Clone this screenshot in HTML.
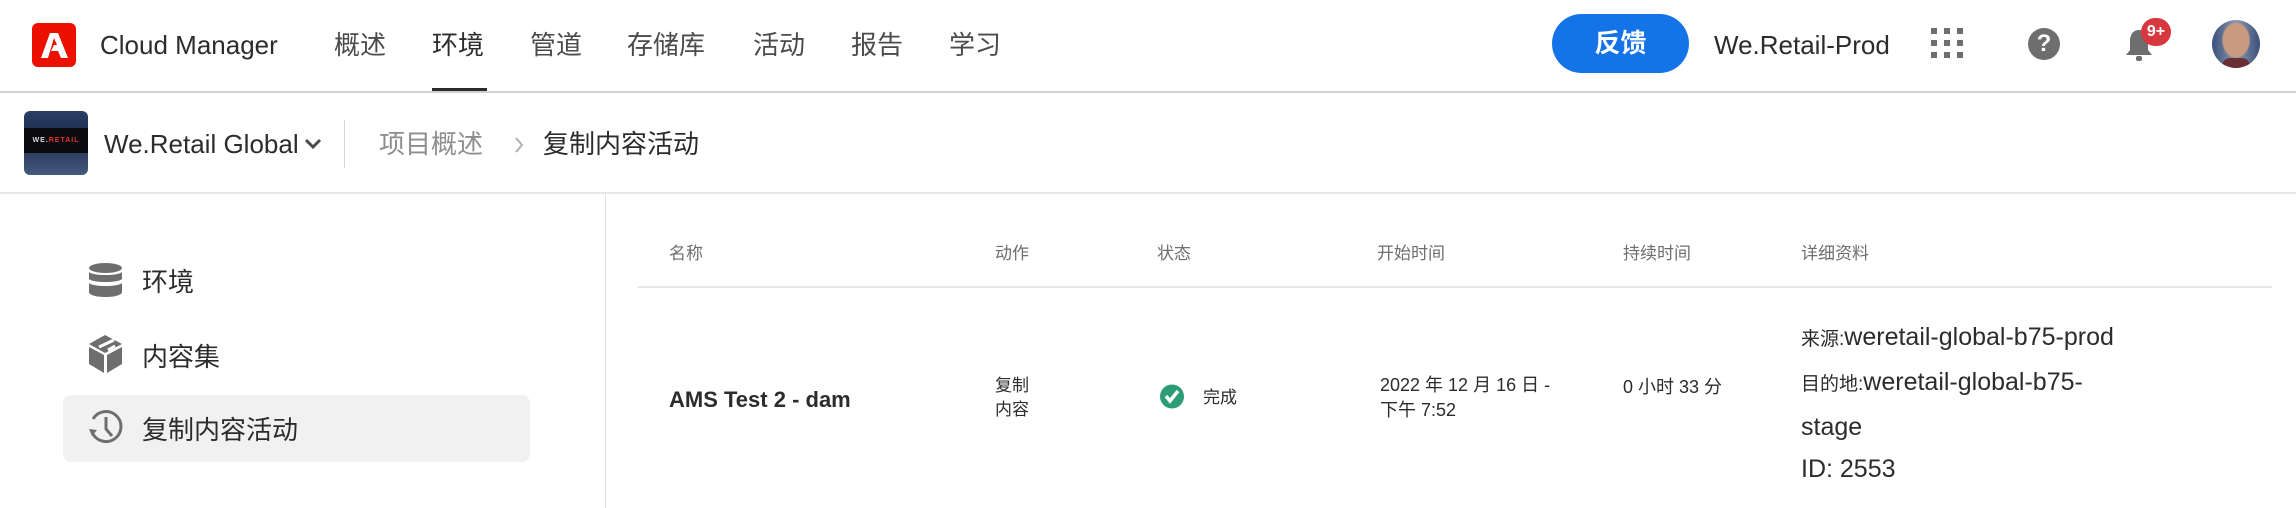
<!DOCTYPE html>
<html><head><meta charset="utf-8"><style>
*{margin:0;padding:0;box-sizing:border-box}
body{width:2296px;height:508px;background:#fff;font-family:"Liberation Sans","Noto Sans CJK SC",sans-serif;color:#2c2c2c;position:relative;overflow:hidden}
.a{position:absolute;white-space:nowrap}
.nav{font-size:26px;color:#4b4b4b;top:27px;line-height:36px}
.th{font-size:17px;color:#6e6e6e;top:242px;line-height:24px}
</style></head><body>
<div class="a" style="left:32px;top:23px;width:44px;height:44px;background:#eb1000;border-radius:6px">
<svg width="44" height="44" viewBox="0 0 44 44"><path d="M18 10h8l10 25h-7l-3-7h-7l3-6h3l-3-7-6 20H9z" fill="#fff"/></svg></div>
<div class="a" style="left:100px;top:27px;font-size:26px;line-height:36px;color:#2c2c2c">Cloud Manager</div>
<div class="a nav" style="left:334px">概述</div>
<div class="a nav" style="left:432px;color:#2c2c2c">环境</div>
<div class="a" style="left:432px;top:88px;width:55px;height:5px;background:#2c2c2c"></div>
<div class="a nav" style="left:530px">管道</div>
<div class="a nav" style="left:627px">存储库</div>
<div class="a nav" style="left:753px">活动</div>
<div class="a nav" style="left:851px">报告</div>
<div class="a nav" style="left:949px">学习</div>
<div class="a" style="left:1552px;top:14px;width:137px;height:59px;background:#1473e6;border-radius:30px;color:#fff;font-weight:bold;font-size:26px;line-height:59px;text-align:center">反馈</div>
<div class="a" style="left:1714px;top:27px;font-size:26px;line-height:36px;color:#2c2c2c">We.Retail-Prod</div>
<svg class="a" style="left:1931px;top:28px" width="32" height="30"><g fill="#6e6e6e"><rect x="0" y="0" width="6" height="6"/><rect x="13" y="0" width="6" height="6"/><rect x="26" y="0" width="6" height="6"/><rect x="0" y="12" width="6" height="6"/><rect x="13" y="12" width="6" height="6"/><rect x="26" y="12" width="6" height="6"/><rect x="0" y="24" width="6" height="6"/><rect x="13" y="24" width="6" height="6"/><rect x="26" y="24" width="6" height="6"/></g></svg>
<div class="a" style="left:2028px;top:28px;width:32px;height:32px;border-radius:50%;background:#6e6e6e;color:#fff;font-weight:bold;font-size:24px;line-height:32px;text-align:center">?</div>
<svg class="a" style="left:2123px;top:28px" width="32" height="36" viewBox="0 0 32 36"><path d="M16 2c-6 0-9 5-9 11v9l-4 5h26l-4-5v-9c0-6-3-11-9-11z" fill="#6e6e6e"/><rect x="13" y="28" width="6" height="5" rx="2" fill="#6e6e6e"/></svg>
<div class="a" style="left:2141px;top:18px;width:30px;height:28px;border-radius:14px;background:#d7373f;color:#fff;font-size:16px;font-weight:bold;line-height:28px;text-align:center">9+</div>
<div class="a" style="left:2212px;top:20px;width:48px;height:48px;border-radius:50%;background:radial-gradient(ellipse 30% 38% at 50% 42%,#c99a80 0 90%,transparent 100%),linear-gradient(90deg,#3b4f7a,#8a9bb0 50%,#3b4f7a);overflow:hidden"><div style="position:absolute;left:10px;top:38px;width:28px;height:14px;background:#6a2e35;border-radius:8px 8px 0 0"></div></div>
<div class="a" style="left:0;top:91px;width:2296px;height:2px;background:#cfcfcf"></div>
<div class="a" style="left:24px;top:111px;width:64px;height:64px;border-radius:6px;background:linear-gradient(#2c3f66,#1c2c4a 40%,#45597e);overflow:hidden">
<div style="position:absolute;left:0;top:17px;width:64px;height:25px;background:#0b0b0f;color:#ddd;font-size:7px;font-weight:bold;line-height:25px;text-align:center;letter-spacing:1px">WE.<span style="color:#e0362c">RETAIL</span></div></div>
<div class="a" style="left:104px;top:126px;font-size:26px;line-height:36px;color:#2c2c2c">We.Retail Global</div>
<svg class="a" style="left:303px;top:137px" width="20" height="14"><path d="M3 3l7 7 7-7" stroke="#4b4b4b" stroke-width="3" fill="none"/></svg>
<div class="a" style="left:344px;top:120px;width:1px;height:48px;background:#d5d5d5"></div>
<div class="a" style="left:379px;top:126px;font-size:26px;line-height:36px;color:#8e8e8e">项目概述</div>
<svg class="a" style="left:512px;top:135px" width="14" height="20"><path d="M4 3l6 7-6 7" stroke="#b0b0b0" stroke-width="2" fill="none"/></svg>
<div class="a" style="left:543px;top:126px;font-size:26px;line-height:36px;color:#2c2c2c">复制内容活动</div>
<div class="a" style="left:0;top:192px;width:2296px;height:2px;background:#e6e6e6"></div>
<div class="a" style="left:605px;top:194px;width:1px;height:314px;background:#e1e1e1"></div>
<svg class="a" style="left:89px;top:263px" width="33" height="34" viewBox="0 0 33 34"><g fill="#6e6e6e"><ellipse cx="16.5" cy="5" rx="16.5" ry="5"/><path d="M0 9c4 4 29 4 33 0v7c-4 4-29 4-33 0z"/><path d="M0 20c4 4 29 4 33 0v9c0 3-7 5-16.5 5S0 32 0 29z"/></g></svg>
<div class="a" style="left:142px;top:264px;font-size:26px;line-height:36px">环境</div>
<svg class="a" style="left:89px;top:335px" width="33" height="38" viewBox="0 0 33 38"><g fill="#6e6e6e"><path d="M16 0l17 9-17 9L0 9z"/><path d="M0 12l15 8v18L0 29z"/><path d="M33 12l-15 8v18l15-9z"/></g><path d="M10 12l15-7" stroke="#fff" stroke-width="3"/><path d="M19 15l7-4" stroke="#fff" stroke-width="3"/></svg>
<div class="a" style="left:142px;top:339px;font-size:26px;line-height:36px">内容集</div>
<div class="a" style="left:63px;top:395px;width:467px;height:67px;background:#f1f1f1;border-radius:8px"></div>
<svg class="a" style="left:87px;top:409px" width="36" height="37" viewBox="0 0 36 37"><path d="M5 23A15 15 0 1 0 6 10" stroke="#6e6e6e" stroke-width="3" fill="none"/><path d="M2 20l3 7 5-6z" fill="#6e6e6e"/><path d="M19 8v12l6 7" stroke="#6e6e6e" stroke-width="3" fill="none"/></svg>
<div class="a" style="left:142px;top:412px;font-size:26px;line-height:36px">复制内容活动</div>
<div class="th a" style="left:669px">名称</div>
<div class="th a" style="left:995px">动作</div>
<div class="th a" style="left:1157px">状态</div>
<div class="th a" style="left:1377px">开始时间</div>
<div class="th a" style="left:1623px">持续时间</div>
<div class="th a" style="left:1801px">详细资料</div>
<div class="a" style="left:638px;top:286px;width:1634px;height:2px;background:#e6e6e6"></div>
<div class="a" style="left:669px;top:385px;font-size:22px;font-weight:bold;line-height:30px">AMS Test 2 - dam</div>
<div class="a" style="left:995px;top:374px;font-size:17px;line-height:24px">复制<br>内容</div>
<svg class="a" style="left:1160px;top:384px" width="24" height="25"><circle cx="12" cy="12.5" r="12" fill="#2d9d78"/><path d="M6 12l4 5 8-10" stroke="#fff" stroke-width="3.5" fill="none"/></svg>
<div class="a" style="left:1203px;top:386px;font-size:17px;line-height:24px">完成</div>
<div class="a" style="left:1380px;top:373px;font-size:18px;line-height:25px">2022 年 12 月 16 日 -<br>下午 7:52</div>
<div class="a" style="left:1623px;top:375px;font-size:18px;line-height:25px">0 小时 33 分</div>
<div class="a" style="left:1801px;top:316px;font-size:25px;line-height:42px;color:#2c2c2c"><span style="font-size:19px">来源:</span>weretail-global-b75-prod<br><span style="font-size:19px">目的地:</span>weretail-global-b75-<br>stage<br>ID: 2553</div>
</body></html>
